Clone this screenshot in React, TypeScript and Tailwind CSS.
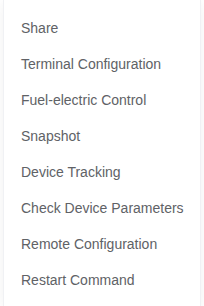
import React from 'react';

const items = [
  'Share',
  'Terminal Configuration',
  'Fuel-electric Control',
  'Snapshot',
  'Device Tracking',
  'Check Device Parameters',
  'Remote Configuration',
  'Restart Command',
];

export default function App() {
  return (
    <div className="h-[306px] w-[204px] overflow-hidden bg-white font-['Liberation_Sans',Arial,sans-serif]">
      <div className="mx-[3px] h-full border-x border-[#f0f1f4] bg-white pt-[10px] shadow-[0_2px_12px_0_rgba(0,0,0,0.06)]">
        <ul>
          {items.map((label) => (
            <li
              key={label}
              className="cursor-pointer whitespace-nowrap px-[17px] text-[14px] leading-[36px] text-[#606266]"
            >
              {label}
            </li>
          ))}
        </ul>
      </div>
    </div>
  );
}
